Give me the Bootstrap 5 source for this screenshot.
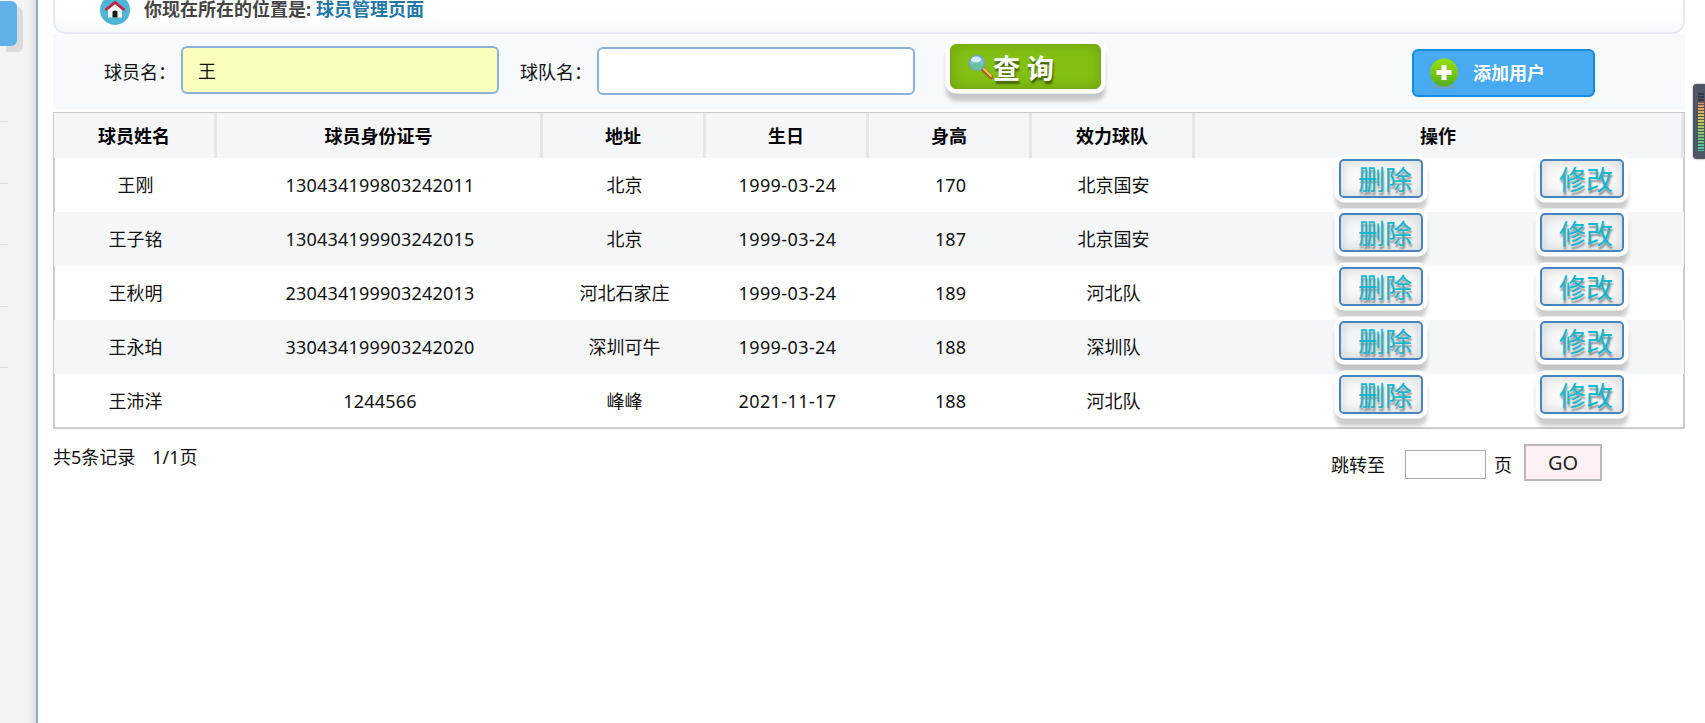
<!DOCTYPE html>
<html lang="zh-CN">
<head>
<meta charset="utf-8">
<title>球员管理页面</title>
<link href="https://cdn.jsdelivr.net/npm/bootstrap@5.3.0/dist/css/bootstrap.min.css" rel="stylesheet">
<style>
body{font-family:"Noto Sans","Noto Sans CJK SC",sans-serif;font-size:18px;line-height:24px;color:#111;background:#fff;overflow:hidden}
.side-strip{width:38px;background:linear-gradient(90deg,#f4f4f4 26px,#eaebec 31px,#dfe2e4 36px);border-right:2px solid #8aabd2}
.side-active{width:17px;height:45px;margin-top:1px;background:#5fb1e8;border-radius:0 6px 6px 0;box-shadow:6px 6px 0 #dcdcdc}
.side-rule{width:8px;height:1px;margin-bottom:60.5px;background:#dedede}
.side-rules{margin-top:75px}
.main-area{width:1632px;margin-left:15px}
.crumb-bar{height:34px;border:2px solid #e5e9f6;border-top:0;border-radius:0 0 13px 13px;background:linear-gradient(#fff,#fdfeff 16px,#f6fafd);padding-left:45px;font-weight:700;color:#444;line-height:19px}
.crumb-bar span{margin-left:14px}
.crumb-bar a{color:#2376a6;margin-left:5px}
.search-bar{height:75px;background:#f6fafd;padding-left:51px}
.search-bar label{width:77px;padding-top:26px}
.field{width:318px;height:48px;border:2px solid #8bb2d8;border-radius:6px;font-size:18px;padding:0 15px;line-height:44px;color:#111;outline:0}
.field-fill{background:#faffbd}
.raised{box-shadow:inset 0 0 12px 2px rgba(0,0,0,.13),0 0 0 4.500px #fff,0 8px 4px 4px rgba(0,0,0,.2);white-space:nowrap}
.find-btn{width:151px;height:45px;margin:10px 0 0 35px;border:1px solid #76a81b;border-radius:6px;background:#84c013;color:#fff;font-size:27px;font-weight:700;line-height:38px;padding:0 0 0 16px;text-shadow:1px 3px 2px rgba(0,0,0,.5)}
.find-btn span{padding-top:4px;margin-left:-1px}
.add-btn{width:183px;height:48px;margin:15px 0 0 311px;border:2px solid #128be1;border-radius:6px;background:#48abf1;color:#fff;font-size:18px;font-weight:700;padding:0 0 0 15px}
.players{width:1632px;margin-top:3px;border:1px solid #c9c9ca}
.players table{width:1630px;table-layout:fixed;border-collapse:separate;border-spacing:0;text-align:center}
.players th{height:45px;background:#f5f6f8;border-right:3px solid #e6e7ea;padding:0;color:#000}
.players td{height:54px;padding:0 0 1px}
.players td:last-child{padding:0}
.players tbody tr:nth-child(even){background:#f5f6f8}
.players tbody tr:nth-child(odd) td:first-child{box-shadow:inset 1px 0 #cfcfcf}
.players tbody tr:nth-child(odd) td:last-child{box-shadow:inset -1px 0 #cfcfcf}
.players tbody tr:last-child{box-shadow:inset 0 -1px #cfcfcf}
.num{letter-spacing:.2px}.day{letter-spacing:.4px}
.ops{height:54px;padding-left:144px;gap:117px}
.op-btn{width:84px;height:39px;border:2px solid #4583c1;border-radius:5px;color:#13b8d0;font-size:27px;line-height:32px;padding:3px 0 0 17px;text-align:left;text-shadow:1px 3px 2px rgba(0,0,0,.42);background:#fafafa;margin-top:.5px}
.players tr:nth-child(even) .op-btn{background:#f5f6f8}
.jump-input{width:81px;height:29px;border:1px solid #aaa;margin:0 8px 0 20px}
.go-btn{width:78px;height:37px;border:2px solid #b8b8b8;background:#fff0f6;font-size:20px;line-height:32px;padding:0;margin-left:12px;color:#222}
.meter{right:0;top:84px;width:12px;height:75px;background:#505563;border-radius:4px 0 0 4px;box-shadow:0 0 2px #777;padding:9px 1px 8px 5px}
.meter-scale{height:58px;background:repeating-linear-gradient(transparent 0 2px,#505563 2px 3px),linear-gradient(#343843 0 9px,#e98a55 10px,#e6b34c 20px,#c8ca53 29px,#80c866 40px,#42c7a0 57px)}
</style>
</head>
<body>
<div class="d-flex vh-100">
  <aside class="side-strip flex-shrink-0">
    <div class="side-active"></div>
    <div class="side-rules"><div class="side-rule"></div><div class="side-rule"></div><div class="side-rule"></div><div class="side-rule"></div><div class="side-rule"></div></div>
  </aside>
  <main class="main-area flex-shrink-0">
    <div class="crumb-bar d-flex align-items-start">
      <svg width="30" height="25" viewBox="0 5 30 25"><circle cx="15" cy="15" r="15" fill="#4eb5d4"/><path d="M8 15l7-6 7 6v7.500H8z" fill="#fff"/><path d="M5.500 15L15 7.500l9.500 7.500" fill="none" stroke="#c51f3c" stroke-width="2.600"/><path d="M12.500 22.500v-6q2.500-2 5 0v6z" fill="#16191c"/></svg>
      <span>你现在所在的位置是:</span><a class="text-decoration-none">球员管理页面</a>
    </div>
    <div class="search-bar d-flex">
      <label>球员名：</label><input class="field field-fill" style="margin-top:12px" value="王">
      <label style="margin-left:21px">球队名：</label><input class="field" style="margin-top:13px">
      <button class="find-btn raised d-flex align-items-center">
        <svg width="27" height="27" viewBox="0 0 27 27" class="flex-shrink-0"><path d="M16 16l8 8" stroke="#a65f1c" stroke-width="4.500" stroke-linecap="round"/><path d="M17 16l7 7" stroke="#f5c568" stroke-width="2" stroke-linecap="round"/><circle cx="10" cy="10" r="7.500" fill="#80bde2" stroke="#6fa4bd" stroke-width="1.500"/><path d="M4 11q6-3 12 0-1 6-6 6t-6-6" fill="#65c29a"/><ellipse cx="9" cy="6.500" rx="5" ry="3" fill="#d3edff"/></svg><span>查 询</span>
      </button>
      <button class="add-btn d-flex align-items-center">
        <svg width="30" height="32" viewBox="0 0 30 32" class="flex-shrink-0" style="margin-right:14px"><defs><linearGradient id="g" x2="0" y2="1"><stop stop-color="#9be000"/><stop offset="1" stop-color="#55ad23"/></linearGradient></defs><ellipse cx="15" cy="30" rx="13" ry="1.500" fill="#6d9fb8"/><circle cx="15" cy="15.500" r="14" fill="url(#g)"/><path d="M15 8v15M7.500 15.500h15" stroke="#fff" stroke-width="5"/></svg><span>添加用户</span>
      </button>
    </div>
    <div class="players">
      <table>
        <colgroup><col style="width:10%"><col style="width:20%"><col style="width:10%"><col style="width:10%"><col style="width:10%"><col style="width:10%"><col style="width:30%"></colgroup>
        <thead><tr><th>球员姓名</th><th>球员身份证号</th><th>地址</th><th>生日</th><th>身高</th><th>效力球队</th><th>操作</th></tr></thead>
        <tbody>
          <tr><td>王刚</td><td class="num">130434199803242011</td><td>北京</td><td class="day">1999-03-24</td><td>170</td><td>北京国安</td><td><div class="ops d-flex"><button class="op-btn raised">删除</button><button class="op-btn raised">修改</button></div></td></tr>
          <tr><td>王子铭</td><td class="num">130434199903242015</td><td>北京</td><td class="day">1999-03-24</td><td>187</td><td>北京国安</td><td><div class="ops d-flex"><button class="op-btn raised">删除</button><button class="op-btn raised">修改</button></div></td></tr>
          <tr><td>王秋明</td><td class="num">230434199903242013</td><td>河北石家庄</td><td class="day">1999-03-24</td><td>189</td><td>河北队</td><td><div class="ops d-flex"><button class="op-btn raised">删除</button><button class="op-btn raised">修改</button></div></td></tr>
          <tr><td>王永珀</td><td class="num">330434199903242020</td><td>深圳可牛</td><td class="day">1999-03-24</td><td>188</td><td>深圳队</td><td><div class="ops d-flex"><button class="op-btn raised">删除</button><button class="op-btn raised">修改</button></div></td></tr>
          <tr><td>王沛洋</td><td class="num">1244566</td><td>峰峰</td><td class="day">2021-11-17</td><td>188</td><td>河北队</td><td><div class="ops d-flex"><button class="op-btn raised">删除</button><button class="op-btn raised">修改</button></div></td></tr>
        </tbody>
      </table>
    </div>
    <div class="d-flex justify-content-between">
      <div style="padding-top:16px">共5条记录<span style="margin-left:17px">1/1页</span></div>
      <div class="d-flex align-items-center" style="padding-top:15px;margin-right:83px"><span class="pt-1">跳转至</span><input class="jump-input mt-1"><span class="pt-1">页</span><button class="go-btn">GO</button></div>
    </div>
  </main>
</div>
<div class="meter position-absolute"><div class="meter-scale"></div></div>
<script src="https://cdn.jsdelivr.net/npm/bootstrap@5.3.0/dist/js/bootstrap.bundle.min.js"></script>
</body>
</html>
